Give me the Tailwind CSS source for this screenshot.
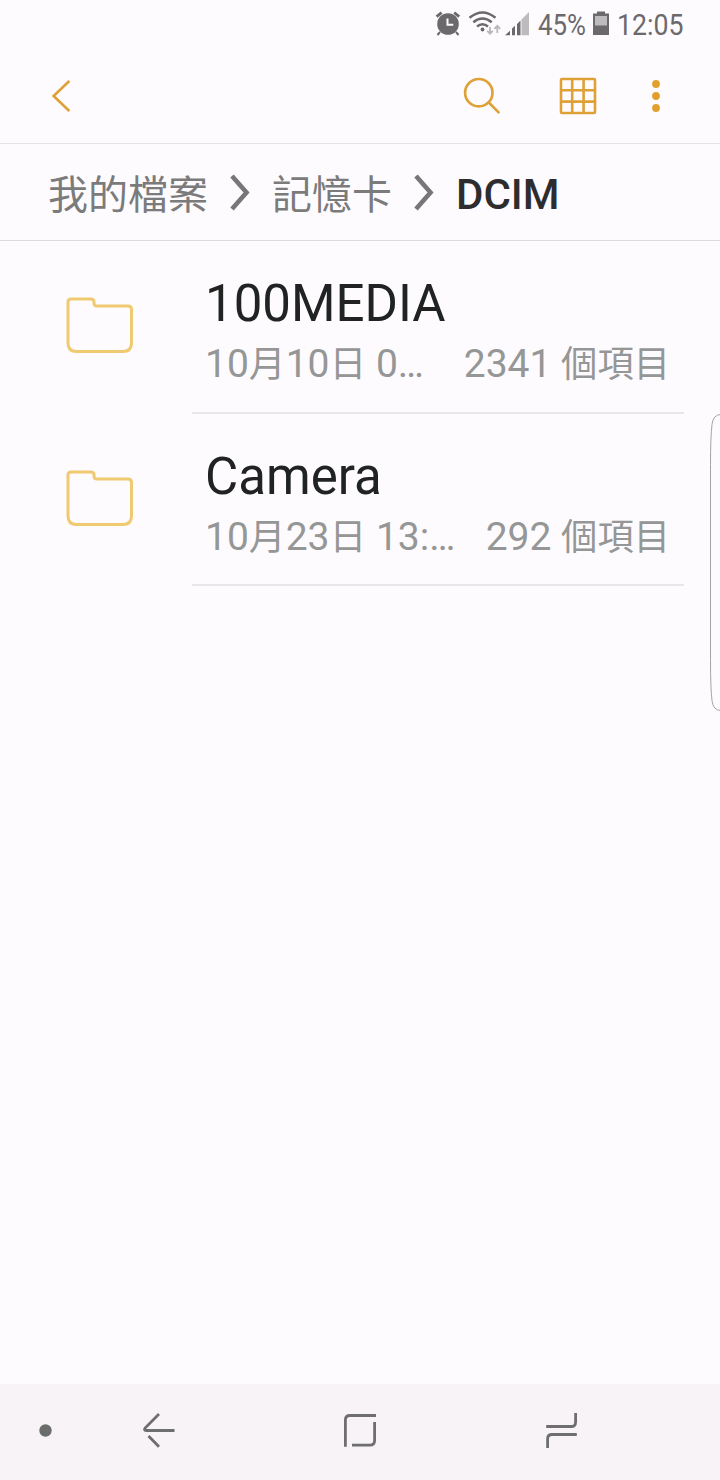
<!DOCTYPE html>
<html lang="zh-Hant">
<head>
<meta charset="utf-8">
<title>我的檔案</title>
<script src="https://cdn.jsdelivr.net/npm/@tailwindcss/browser@4"></script>
</head>
<body class="relative flex h-[1480px] w-[720px] flex-col overflow-hidden bg-[#fefbff] font-['Roboto','Noto_Sans_CJK_TC',sans-serif]">
  <!-- Status bar -->
  <header class="flex h-12 shrink-0 items-center text-[30px] leading-[48px] text-[#6b696c]">
    <svg class="ml-[430px] h-12 w-[104px] shrink-0" viewBox="430 0 104 48" fill="none">
      <circle cx="448" cy="24" r="10.8" fill="#6b696c"/>
      <path d="M436.6 16.600l5-4M459.200 16.600l-5-4" stroke="#6b696c" stroke-width="2.800"/>
      <path d="M440 32l-2.500 3M456 32l2.500 3" stroke="#6b696c" stroke-width="2"/>
      <path d="M447.500 18.500v6.300h5.800" stroke="#fefbff" stroke-width="2"/>
      <path d="M469.500 17.800q13-10.600 26 0M473.300 22.300q9.200-7.600 18.400 0M477 26.500q5.500-4.600 11 0" stroke="#6b696c" stroke-width="2.500"/>
      <circle cx="482.500" cy="29.500" r="1.900" fill="#6b696c"/>
      <path d="M490 27v7M487.200 30.800l2.800 3 2.800-3M497.300 33v-7M494.400 28.800l2.900-3 2.900 3" stroke="#b9b7ba" stroke-width="1.800"/>
      <path d="M505 35.300l5-4.600v4.600zM512 28.500l3-2.800v9.600h-3zM517 24l3.500-3.500v14.800H517z" fill="#6b696c"/>
      <path d="M521.500 19.500L529 12v23.300h-7.500z" fill="#bdbbbe"/>
    </svg>
    <span class="mt-0.5 ml-1 w-[54px] shrink-0 origin-left scale-x-[0.86] whitespace-nowrap">45%</span>
    <svg class="h-12 w-[18px] shrink-0" viewBox="592 0 18 48">
      <path d="M593 13.500h4v-2h8v2h4V35h-16z" fill="#6b696c"/>
      <path d="M595 16h12v9.500h-12z" fill="#bdbbbe"/>
    </svg>
    <span class="mt-0.5 ml-[7px] origin-left scale-x-[0.89] whitespace-nowrap">12:05</span>
  </header>

  <!-- Toolbar -->
  <nav class="h-24 shrink-0 border-b border-[#e6e2e6]">
    <svg class="block h-[95px] w-[720px]" viewBox="0 48 720 95" fill="none" stroke="#dfa036" stroke-width="2.600">
      <path d="M69.300 81L53.600 96l15.700 15"/>
      <circle cx="478.800" cy="92.700" r="13.700"/>
      <path d="M488.800 102.500l9.800 9.800" stroke-linecap="round"/>
      <rect x="561" y="79" width="34" height="34" rx="1"/>
      <path d="M572.200 79v34M583.600 79v34M561 90.300h34M561 101.600h34"/>
      <g fill="#e1a02d" stroke="none"><circle cx="656" cy="84" r="3.900"/><circle cx="656" cy="96" r="3.900"/><circle cx="656" cy="108" r="3.900"/></g>
    </svg>
  </nav>

  <!-- Breadcrumb -->
  <div class="flex h-[97px] shrink-0 items-center border-b border-[#dcd9dd] pl-12 text-[40px] leading-[60px] whitespace-nowrap text-[#7b7b7b]">
    <span class="w-[182px] shrink-0 pt-[7px]">我的檔案</span>
    <svg class="h-10 w-5 shrink-0" viewBox="230 172 20 40" fill="none" stroke="#777" stroke-width="4.600"><path d="M232 176l14.500 16.500-14.500 16.500"/></svg>
    <span class="ml-[22px] w-[142px] shrink-0 pt-[7px]">記憶卡</span>
    <svg class="h-10 w-5 shrink-0" viewBox="414 172 20 40" fill="none" stroke="#777" stroke-width="4.600"><path d="M416 176l14.500 16.500-14.500 16.500"/></svg>
    <span class="ml-[22px] pt-[5px] text-[42px] font-medium text-[#2d2d2f]">DCIM</span>
  </div>

  <!-- Folder list -->
  <main class="flex grow flex-col">
    <section class="flex h-[172.500px] shrink-0">
      <svg class="h-[172px] w-48 shrink-0" viewBox="0 241 192 172" fill="none" stroke="#f0ca70" stroke-width="3"><path d="M71 299h20q3 0 3 3v1q0 3 3 3h31q3.500 0 3.500 3.500V343q0 8.500-8.500 8.500H76.500q-8.500 0-8.500-8.500V302q0-3 3-3z"/></svg>
      <div class="flex w-[492px] flex-col border-b-2 border-[#e9e6ea] pt-[33px] pl-[13px]">
        <h2 class="h-[60px] text-[51px] leading-[60px] text-[#212322]">100MEDIA</h2>
        <div class="flex justify-between pr-[14px] text-[39px] leading-[60px] whitespace-nowrap text-[#959796]">
          <p>10<span class="text-[36.800px]">月</span>10<span class="text-[36.800px]">日</span> 0…</p>
          <p>2341 <span class="text-[36.300px]">個項目</span></p>
        </div>
      </div>
    </section>
    <section class="flex h-[172.500px] shrink-0">
      <svg class="h-[172px] w-48 shrink-0" viewBox="0 241 192 172" fill="none" stroke="#f0ca70" stroke-width="3"><path d="M71 299h20q3 0 3 3v1q0 3 3 3h31q3.500 0 3.500 3.500V343q0 8.500-8.500 8.500H76.500q-8.500 0-8.500-8.500V302q0-3 3-3z"/></svg>
      <div class="flex w-[492px] flex-col border-b-2 border-[#e9e6ea] pt-[33px] pl-[13px]">
        <h2 class="h-[60px] text-[51px] leading-[60px] text-[#212322]">Camera</h2>
        <div class="flex justify-between pr-[14px] text-[39px] leading-[60px] whitespace-nowrap text-[#959796]">
          <p>10<span class="text-[36.800px]">月</span>23<span class="text-[36.800px]">日</span> 13:…</p>
          <p>292 <span class="text-[36.300px]">個項目</span></p>
        </div>
      </div>
    </section>
  </main>

  <!-- Edge panel handle -->
  <svg class="absolute top-[410px] right-0 h-[306px] w-3" viewBox="708 410 12 306" fill="none" stroke="#a5a3a6" stroke-width="1"><path d="M721 414.500q-8 0-9 10-1.500 12-1.500 40v196q0 28 1.500 40 1 10 9 10"/></svg>

  <!-- Navigation bar -->
  <footer class="h-24 shrink-0 bg-[#f7f3f7]">
    <svg class="h-24 w-[720px]" viewBox="0 1384 720 96" fill="none" stroke="#6e6e6e" stroke-width="2.800">
      <circle cx="45.500" cy="1430.500" r="6.200" fill="#6b6d6b" stroke="none"/>
      <path d="M159 1414l-13.700 13.800q-2 2.700 1 2.700h28.200M148.500 1436l10.500 10.700"/>
      <path d="M345.400 1446.800V1420q0-4.500 4.500-4.500H376M374.600 1422v18.500q0 4.700-4.700 4.700H352"/>
      <path d="M546.200 1426.500H571q4.600 0 4.600-4.600V1413M576.800 1434.500H552q-4.400 0-4.400 4.500v9"/>
    </svg>
  </footer>
</body>
</html>
